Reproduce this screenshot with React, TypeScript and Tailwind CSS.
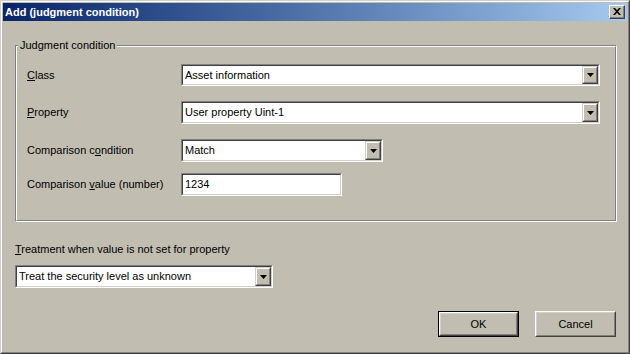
import type { ReactNode } from 'react';

const face = 'bg-[#c1bdb1]';

function Sunken({ className, children }: { className: string; children: ReactNode }) {
  return (
    <div className={`border border-t-[#808080] border-l-[#808080] border-b-white border-r-white ${className}`}>
      <div className="h-full flex items-center bg-white border border-t-[#404040] border-l-[#404040] border-b-[#d4d0c8] border-r-[#d4d0c8]">
        {children}
      </div>
    </div>
  );
}

function DropButton() {
  return (
    <div className="h-full w-[16px] shrink-0 border border-t-[#d4d0c8] border-l-[#d4d0c8] border-b-[#404040] border-r-[#404040]">
      <div className={`h-full flex items-center justify-center ${face} border border-t-white border-l-white border-b-[#808080] border-r-[#808080]`}>
        <svg width="7" height="4" viewBox="0 0 7 4">
          <path d="M0 0h7L3.5 4z" fill="#000" />
        </svg>
      </div>
    </div>
  );
}

function Combo({ value, className }: { value: string; className: string }) {
  return (
    <Sunken className={className}>
      <span className="flex-1 pl-[2px] truncate">{value}</span>
      <DropButton />
    </Sunken>
  );
}

function Row({ label, children }: { label: ReactNode; children: ReactNode }) {
  return (
    <div className="flex items-center">
      <span className="w-[154px] shrink-0">{label}</span>
      {children}
    </div>
  );
}

function Button({ label, isDefault }: { label: string; isDefault?: boolean }) {
  const outer = isDefault ? 'border border-black' : '';
  return (
    <div className={`w-[81px] h-[26px] ${outer}`}>
      <div className="h-full border border-t-white border-l-white border-b-[#404040] border-r-[#404040]">
        <div className={`h-full flex items-center justify-center ${face} border border-t-[#d4d0c8] border-l-[#d4d0c8] border-b-[#808080] border-r-[#808080]`}>
          {label}
        </div>
      </div>
    </div>
  );
}

export default function App() {
  return (
    <div
      className={`w-[630px] h-[354px] ${face} text-[11px] leading-[13px] text-black border border-t-[#d4d0c8] border-l-[#d4d0c8] border-b-[#404040] border-r-[#404040]`}
      style={{ fontFamily: '"Liberation Sans", Arial, sans-serif' }}
    >
      <div className="h-full flex flex-col p-px border border-t-white border-l-white border-b-[#808080] border-r-[#808080]">
        {/* caption */}
        <div className="h-[18px] shrink-0 flex items-center justify-between pl-[2px] pr-[2px] bg-linear-to-r from-[#0a246a] to-[#a6caf0]">
          <span className="text-white font-bold text-[11px]">Add (judgment condition)</span>
          <div className="w-[16px] h-[14px] border border-t-white border-l-white border-b-[#404040] border-r-[#404040]">
            <div className={`h-full flex items-center justify-center ${face} border-b border-r border-b-[#808080] border-r-[#808080]`}>
              <svg width="8" height="7" viewBox="0 0 8 7">
                <path d="M0 0h2l2 2.2L6 0h2L5 3.5 8 7H6L4 4.8 2 7H0l3-3.5z" fill="#000" />
              </svg>
            </div>
          </div>
        </div>

        <div className="flex-1 flex flex-col pl-[12px] pr-[10px] pt-[24px]">
          {/* group box */}
          <div className="relative border border-t-[#808080] border-l-[#808080] border-b-white border-r-white">
            <span className={`absolute left-[2px] top-[-7px] px-[2px] ${face}`}>Judgment condition</span>
            <div className="flex flex-col pl-[10px] pt-[17px] pb-[24px] border border-t-white border-l-white border-b-[#808080] border-r-[#808080]">
              <Row label={<><u>C</u>lass</>}>
                <Combo value="Asset information" className="w-[419px] h-[22px]" />
              </Row>
              <div className="mt-[15px]">
                <Row label={<><u>P</u>roperty</>}>
                  <Combo value="User property Uint-1" className="w-[419px] h-[23px]" />
                </Row>
              </div>
              <div className="mt-[15px]">
                <Row label={<>Comparison c<u>o</u>ndition</>}>
                  <Combo value="Match" className="w-[202px] h-[23px]" />
                </Row>
              </div>
              <div className="mt-[11px]">
                <Row label={<>Comparison <u>v</u>alue (number)</>}>
                  <Sunken className="w-[161px] h-[23px]">
                    <span className="pl-[2px]">1234</span>
                  </Sunken>
                </Row>
              </div>
            </div>
          </div>

          <div className="mt-[21px]">
            <u>T</u>reatment when value is not set for property
          </div>
          <Combo value="Treat the security level as unknown" className="mt-[9px] w-[258px] h-[23px]" />

          <div className="mt-[23px] flex justify-end gap-[16px] pr-px">
            <Button label="OK" isDefault />
            <Button label="Cancel" />
          </div>
        </div>
      </div>
    </div>
  );
}
